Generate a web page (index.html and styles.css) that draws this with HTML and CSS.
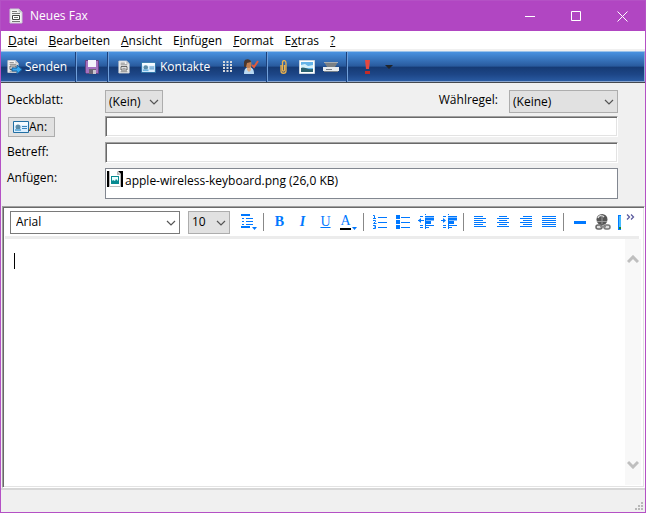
FILE: index.html
```html
<!DOCTYPE html>
<html lang="de">
<head>
<meta charset="utf-8">
<title>Neues Fax</title>
<link rel="stylesheet" href="styles.css">
</head>
<body>
<svg class="defs" aria-hidden="true">
  <symbol id="fax" viewBox="0 0 14 16">
    <path d="M1 1h9l3 3v11H1z" fill="#f4f4f4" stroke="#c9cbd0"/>
    <path d="M10 1v3h3" fill="#bbb" stroke="#c9cbd0"/>
    <path d="M3 3.500h5M3 5.500h8M3 13.500h8" stroke="#777"/>
    <path d="M3.500 7.500h7v4h-7z" fill="#fff" stroke="#444"/>
    <path d="M5 9.500h4" stroke="#777"/>
  </symbol>
  <symbol id="card" viewBox="0 0 16 12">
    <path d="M.5.5h15v11H.5z" fill="#dcefff" stroke="#226fa3"/>
    <path d="M1 1h14v3H1z" fill="#f5fbff"/>
    <circle cx="5" cy="6" r="2.500" fill="#5b8ca8"/>
    <path d="M2 8h6v2H2z" fill="#6fb4df"/>
    <path d="M9 5.500h5M9 7.500h5" stroke="#3a86bd"/>
  </symbol>
  <symbol id="chevron" viewBox="0 0 10 6">
    <path d="M1 1l4 4 4-4" fill="none" stroke="#555" stroke-width="1.200"/>
  </symbol>
</svg>
<div class="window">
  <header class="titlebar">
    <svg class="title-icon" width="14" height="16"><use href="#fax"/></svg>
    <span class="title">Neues Fax</span>
    <button class="caption" aria-label="Minimieren"><svg width="11" height="11"><path d="M0 5.500h10" stroke="#fff"/></svg></button>
    <button class="caption" aria-label="Maximieren"><svg width="11" height="11"><path d="M.5.5h9v9h-9z" fill="none" stroke="#fff"/></svg></button>
    <button class="caption" aria-label="Schließen"><svg width="11" height="11"><path d="M.5.5l10 10M10.500.5l-10 10" stroke="#fff"/></svg></button>
  </header>

  <nav class="menu">
    <a href="#"><u>D</u>atei</a>
    <a href="#"><u>B</u>earbeiten</a>
    <a href="#"><u>A</u>nsicht</a>
    <a href="#">E<u>i</u>nfügen</a>
    <a href="#"><u>F</u>ormat</a>
    <a href="#">E<u>x</u>tras</a>
    <a href="#"><u>?</u></a>
  </nav>

  <div class="toolbar">
    <button class="tool send"><svg width="15" height="16" viewBox="0 0 15 16"><use href="#fax" width="12" height="15"/><path d="M5 9h5V6l5 4.500-5 4.500v-3H5z" fill="#38a7ef" stroke="#17609f"/></svg>Senden</button>
    <i class="groove"></i>
    <button class="tool" aria-label="Speichern"><svg width="14" height="14"><path d="M.5.5h13v13h-12l-1-1z" fill="#a571bf" stroke="#674483"/><path d="M3 0h8v7H3z" fill="#f4f4fa"/><path d="M4 9h7v5H4z" fill="#6b6575"/><path d="M8 10h3v4H8z" fill="#c9c6cf"/></svg></button>
    <i class="groove"></i>
    <button class="tool" aria-label="Deckblatt"><svg width="12" height="14"><use href="#fax"/></svg></button>
    <button class="tool contacts"><svg width="15" height="11"><use href="#card"/></svg>Kontakte</button>
    <button class="tool" aria-label="Wählen"><svg width="9" height="12"><path d="M0 1h9M0 4h9M0 7h9M0 10h9" stroke="#d5d8dc" stroke-width="2" stroke-dasharray="2 1.500"/></svg></button>
    <button class="tool" aria-label="Namen überprüfen"><svg width="16" height="16"><path d="M1 15c0-5 2-7 5-7s5 2 5 7z" fill="#b9d9f3"/><path d="M4 7h4v4l-2 2-2-2z" fill="#e1ad83"/><ellipse cx="5.500" cy="5" rx="3" ry="4" fill="#be7e51"/><path d="M1 8V3c1-4 7-3 7 0L4 4l-1 4z" fill="#49372f"/><path d="M9 6l2 2 4-6" fill="none" stroke="#e05b3d" stroke-width="2"/></svg></button>
    <i class="groove"></i>
    <button class="tool" aria-label="Datei anfügen"><svg width="9" height="15"><path d="M2 5v6c0 3 5 3 5 0V3C7 0 4 0 3.500 2v8c0 2 2 1 2 0V5" fill="none" stroke="#edb34d" stroke-width="1.300"/></svg></button>
    <button class="tool" aria-label="Bild einfügen"><svg width="16" height="14"><path d="M.5.500h15v13H.5z" fill="#fff" stroke="#cbd6df"/><path d="M2 2h12v10H2z" fill="#65b4e8"/><path d="M2 5l4-1 3 2 5-1v3H2z" fill="#d4f1fb"/><path d="M2 8c3-2 6 2 12 1v3H2z" fill="#2b6270"/></svg></button>
    <button class="tool" aria-label="Scannen"><svg width="16" height="10"><path d="M1 0h14l-3 5H4z" fill="#7a8085"/><path d="M1 .5h14" stroke="#a4acb3"/><path d="M0 5h16v4H0z" fill="#e8ecef"/><path d="M1 9.500h14M3 7.500h6" stroke="#77808a"/></svg></button>
    <i class="groove"></i>
    <button class="tool priority" aria-label="Hohe Priorität"><svg width="5" height="14"><path d="M0 0h5L4 9H1z" fill="#e5483e"/><path d="M0 11h5v3H0z" fill="#c12b28"/></svg></button>
    <button class="tool more" aria-label="Priorität wählen"><svg width="8" height="4"><path d="M0 0h8L4 4z" fill="#20252c"/></svg></button>
  </div>

  <form class="fields">
    <div class="row covers">
      <label for="cover">Deckblatt:</label>
      <span class="select cover"><select id="cover"><option>(Kein)</option></select><svg width="10" height="6"><use href="#chevron"/></svg></span>
      <label class="rule-label" for="rule">Wählregel:</label>
      <span class="select rule"><select id="rule"><option>(Keine)</option></select><svg width="10" height="6"><use href="#chevron"/></svg></span>
    </div>
    <div class="row">
      <button class="to" type="button"><svg width="16" height="12"><use href="#card"/></svg>An:</button>
      <input type="text" aria-label="An">
    </div>
    <div class="row">
      <label for="subject">Betreff:</label>
      <input type="text" id="subject">
    </div>
    <div class="row attach">
      <span>Anfügen:</span>
      <div class="attachments"><svg width="16" height="16"><path d="M0 0h16v16H0z"/><path d="M2 0h9l3 3v13H2z" fill="#fff"/><path d="M2.500 0v15.500h11V3" fill="none" stroke="#bbb"/><path d="M10 0l4 4h-4z" fill="#bbb"/><path d="M4 5h8v8H4z" fill="#078a91"/><path d="M5 6h6v4L9 8l-1 2-2-1-1 1z" fill="#e9ffff"/></svg>apple-wireless-keyboard.png (26,0 KB)</div>
    </div>
  </form>

  <main class="editor">
    <div class="format">
      <span class="select family"><select aria-label="Schriftart"><option>Arial</option></select><svg width="10" height="6"><use href="#chevron"/></svg></span>
      <span class="select size"><select aria-label="Schriftgrad"><option>10</option></select><svg width="10" height="6"><use href="#chevron"/></svg></span>
      <button class="fmt" aria-label="Absatzformat"><svg width="16" height="16"><path d="M0 1h9M0 13h9" stroke-width="2"/><path d="M5 4.500h7M5 7.500h7M5 10.500h7M1 4.500h2M1 7.500h2M1 10.500h2"/><path d="M11 13h5l-2.500 3z" class="solid"/></svg></button>
      <i class="bar"></i>
      <button class="fmt glyph"><b>B</b></button>
      <button class="fmt glyph"><b><em>I</em></b></button>
      <button class="fmt glyph"><u>U</u></button>
      <button class="fmt glyph color"><span>A</span><svg width="5" height="3"><path d="M0 0h5L2.500 3z" class="solid"/></svg></button>
      <i class="bar"></i>
      <button class="fmt" aria-label="Nummerierung"><svg width="14" height="14"><path d="M5 2.500h9M5 7.500h9M5 12.500h9M0 .5h1.500v3M0 3.500h3M0 5.500h2.500v1l-2 2h3M0 10.500h2.500v3H0M1 12h2"/></svg></button>
      <button class="fmt" aria-label="Aufzählung"><svg width="14" height="14"><path d="M0 0h4v4H0zM0 5h4v4H0zM0 10h4v4H0z" class="solid"/><path d="M5 2.500h9M5 7.500h9M5 12.500h9"/></svg></button>
      <button class="fmt" aria-label="Einzug verkleinern"><svg width="16" height="16"><path d="M2 2.500h3M7 2.500h9M2 11.500h3M7 11.500h9M2 13.500h3M7 13.500h4"/><path d="M7.500 0v16" stroke-dasharray="1 1"/><path d="M7 5h9M7 8.500h6" stroke-width="3"/><path d="M0 6.500h6"/><path d="M0 6.500L3 4v5z" class="solid"/></svg></button>
      <button class="fmt" aria-label="Einzug vergrößern"><svg width="16" height="16"><path d="M2 2.500h3M7 2.500h9M2 11.500h3M7 11.500h9M2 13.500h3M7 13.500h4"/><path d="M7.500 0v16" stroke-dasharray="1 1"/><path d="M7 5h9M7 8.500h6" stroke-width="3"/><path d="M0 6.500h4"/><path d="M5 6.500L2 4v5z" class="solid"/></svg></button>
      <i class="bar"></i>
      <button class="fmt" aria-label="Linksbündig"><svg width="12" height="12"><path d="M0 .5h9M0 2.500h12M0 4.500h9M0 6.500h12M0 8.500h9M0 10.500h12"/></svg></button>
      <button class="fmt" aria-label="Zentriert"><svg width="12" height="12"><path d="M2 .5h8M0 2.500h12M2 4.500h8M0 6.500h12M2 8.500h8M0 10.500h12"/></svg></button>
      <button class="fmt" aria-label="Rechtsbündig"><svg width="12" height="12"><path d="M3 .5h9M0 2.500h12M3 4.500h9M0 6.500h12M3 8.500h9M0 10.500h12"/></svg></button>
      <button class="fmt" aria-label="Blocksatz"><svg width="14" height="12"><path d="M0 .5h14M0 2.500h14M0 4.500h14M0 6.500h14M0 8.500h14M0 10.500h14"/></svg></button>
      <i class="bar"></i>
      <button class="fmt" aria-label="Linie"><svg width="12" height="3"><path d="M0 1.500h12" stroke-width="3"/></svg></button>
      <button class="fmt own" aria-label="Link"><svg width="16" height="16"><circle cx="7" cy="5.500" r="5.500" fill="#555"/><path d="M3 4c1-3 4-3 6-1" fill="none" stroke="#ddd" stroke-width="1.500"/><path d="M2 7.500h10M7 1v9" stroke="#999"/><rect x="1" y="11" width="6" height="4" rx="2" fill="#ddd" stroke="#666" stroke-width="1.500"/><rect x="9" y="11" width="6" height="4" rx="2" fill="#ddd" stroke="#777" stroke-width="1.500"/><path d="M5 12.500h6" stroke="#888" stroke-width="2"/></svg></button>
      <button class="fmt own clip" aria-label="Bild"><svg width="3" height="15"><path d="M0 0h3v15H0z" fill="#007aff"/><path d="M1 1h2v11H1z" fill="#46baff"/><path d="M1 12h2v2H1z" fill="#198a2c"/></svg></button>
      <button class="fmt own overflow" aria-label="Weitere"><svg width="9" height="6"><path d="M1 .5l2.500 2.500L1 5.500M5 .5L7.500 3 5 5.500" fill="none" stroke="#5c5c9e" stroke-width="1.300"/></svg></button>
    </div>
    <div class="body">
      <div class="text" contenteditable="true" role="textbox" aria-label="Faxtext"><i class="caret"></i></div>
      <div class="scroll">
        <svg width="12" height="9"><path d="M1 7l5-5 5 5" fill="none" stroke="#bfbfbf" stroke-width="3"/></svg>
        <svg width="12" height="9"><path d="M1 2l5 5 5-5" fill="none" stroke="#bfbfbf" stroke-width="3"/></svg>
      </div>
    </div>
  </main>
  <footer class="status"><svg width="8" height="8"><path d="M6 0h2v2H6zM3 3h2v2H3zM6 3h2v2H6zM0 6h2v2H0zM3 6h2v2H3zM6 6h2v2H6z" fill="#b8b8b8"/></svg></footer>
</div>
</body>
</html>
```
FILE: styles.css
```css
* { box-sizing: border-box; }
body { margin: 0; font: 12px/16px "Open Sans", "Noto Sans", sans-serif; color: #000; }
button, input, select { font: inherit; color: inherit; margin: 0; padding: 0; border: 0; border-radius: 0; background: none; outline: 0; }
svg { display: block; flex: none; }
.defs { display: none; }
.window { display: flex; flex-direction: column; height: 100vh; border: 1px solid #b451c5; background: #f0f0f0; }

.titlebar { display: flex; align-items: center; height: 30px; flex: none; padding-left: 8px; background: #b146c2; color: #fff; }
.title { flex: 1; margin-left: 7px; }
.caption { display: grid; place-items: center; width: 46px; height: 28px; }

.menu { display: flex; gap: 11px; flex: none; height: 20px; padding: 2px 7px 0; background: #fff; border-bottom: 2px solid #f0f0f0; }
.menu a { color: #000; text-decoration: none; }

.toolbar { display: flex; flex: none; align-items: center; height: 32px; padding-left: 1px; color: #fff; border-top: 1px solid #9cc3ea; border-bottom: 1px solid #45494f; box-shadow: inset 0 -1px #8aa6cf, inset -1px 0 #8aa6cf;
  background: linear-gradient(#4992e0 0, #28599c 48%, #153a73 49%, #1d4687 75%, #2b5da5 100%); }
.tool { display: flex; align-items: center; justify-content: center; width: 24px; height: 28px; color: #fff; }
.send { width: 70px; justify-content: flex-start; padding-left: 5px; gap: 3px; }
.contacts { width: 79px; justify-content: flex-start; padding-left: 5px; gap: 4px; }
.priority { width: 32px; }
.more { width: 12px; }
.groove { width: 2px; height: 30px; margin: 0 3px; background: linear-gradient(90deg, #1c407a 50%, #6f9fdb 50%); }

.fields { flex: none; display: flex; flex-direction: column; gap: 5px; padding: 7px 27px 7px 6px; }
.row { display: grid; grid-template-columns: 98px 1fr; align-items: start; }
.row > label, .row > span:first-child { padding-top: 2px; }
.covers { grid-template-columns: 98px 58px 1fr 109px; margin-bottom: -2px; }
.rule-label { justify-self: end; margin-right: 11px; }
.select { position: relative; display: block; height: 23px; border: 1px solid #adadad; background: #e1e1e1; }
.select select { appearance: none; width: 100%; height: 100%; padding-left: 3px; }
.select svg { position: absolute; right: 3px; top: 8px; pointer-events: none; }
.row input { width: 100%; height: 21px; padding: 0 3px; background: #fff; border: 1px solid; border-color: #a0a0a0 #fff #fff #a0a0a0; box-shadow: inset 1px 1px #696969, inset -1px -1px #e3e3e3; }
.to { display: flex; align-items: center; width: 47px; height: 20px; margin: 1px; padding-left: 4px; border: 1px solid #adadad; background: #e1e1e1; }
.row + .row:nth-child(2) { height: 21px; }
.attachments { display: flex; gap: 2px; height: 31px; padding: 2px 1px; line-height: 20px; background: #fff; border: 1px solid #828790; }

.editor { flex: 1; min-height: 0; display: flex; flex-direction: column; margin: 0 0 0 1px; border: 1px solid; border-color: #a0a0a0 #fff #fff #a0a0a0; box-shadow: inset 1px 1px #696969, inset -1px -1px #e3e3e3; background: #fff; padding: 3px 3px 2px 2px; }
.format { display: flex; flex: none; align-items: center; height: 29px; margin-right: 2px; padding: 0 0 2px 5px; border-bottom: 3px solid #ececec; }
.family { width: 170px; flex: none; margin-right: 8px; border-color: #7a7a7a; background: #fff; }
.family select { padding-left: 5px; }
.size { width: 42px; flex: none; margin-right: 7px; }
.fmt { display: flex; align-items: center; justify-content: center; width: 23px; height: 22px; flex: none; color: #0078ff; }
.fmt:not(.own) path { fill: none; stroke: #0078ff; }
.fmt:not(.own) .solid { fill: #0078ff; stroke: none; }
.glyph { font: 14px/16px "Liberation Serif", serif; }
.color { gap: 1px; align-items: flex-end; padding-bottom: 3px; }
.color span { width: 11px; height: 16px; border-bottom: 2px solid #000; line-height: 14px; }
.bar { width: 1px; height: 18px; margin: 0 4px 0 3px; background: #888; flex: none; }
.fmt.clip { width: 10px; justify-content: flex-end; padding-right: 3px; }
.fmt.overflow { width: 10px; align-items: flex-start; padding-top: 3px; margin-left: 1px; }
.body { display: flex; flex: 1; min-height: 0; }
.text { flex: 1; padding: 14px 9px; outline: 0; }
.caret { display: block; width: 1px; height: 16px; background: #000; }
.scroll { display: flex; flex-direction: column; justify-content: space-between; align-items: center; width: 16px; padding: 16px 0; background: #f8f8f8; }
.status { display: flex; align-items: flex-end; justify-content: flex-end; flex: none; height: 24px; padding: 2px; border-top: 2px solid #d7d7d7; }
```
